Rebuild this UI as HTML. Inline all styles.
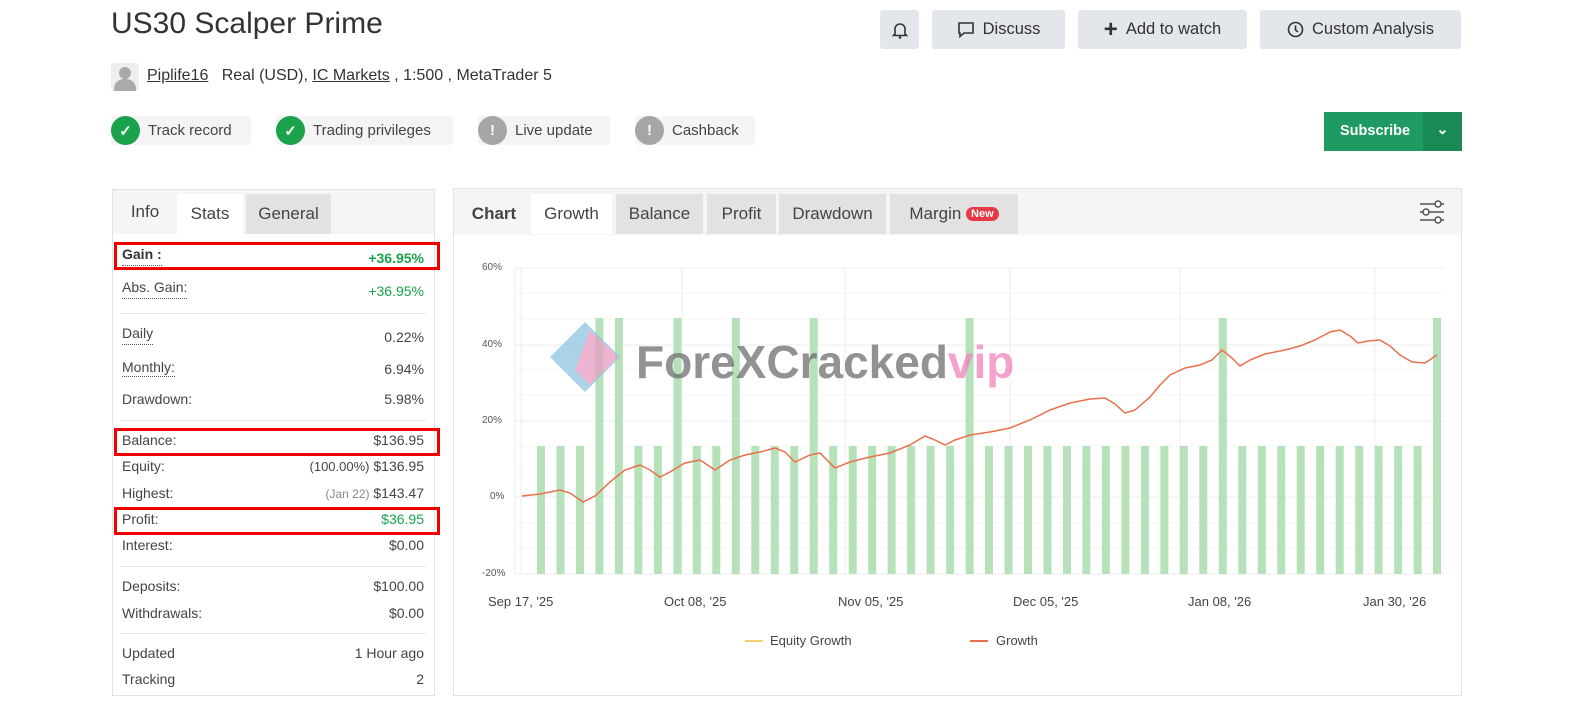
<!DOCTYPE html>
<html><head><meta charset="utf-8"><style>
body{margin:0;width:1571px;height:718px;background:#fff;font-family:"Liberation Sans",sans-serif;color:#333;position:relative;overflow:hidden}
.a{position:absolute}
.btn{position:absolute;top:10px;height:39px;background:#e3e6ea;border-radius:3px;font-size:16.5px;color:#333;display:flex;align-items:center;justify-content:center;gap:8px}
.badge{position:absolute;top:116px;height:29px;background:#f4f4f4;border-radius:3px;font-size:15px;color:#444;display:flex;align-items:center}
.ic{width:29px;height:29px;border-radius:50%;display:flex;align-items:center;justify-content:center;margin-right:8px;color:#fff;font-weight:bold}
.row{position:absolute;left:122px;width:302px;font-size:14px;color:#444;display:flex;justify-content:space-between}
.u{border-bottom:1px dotted #555}
.sep{position:absolute;left:120px;width:306px;height:1px;background:#e6e6e6}
.tab{position:absolute;top:194px;height:40px;font-size:17px;display:flex;align-items:center;justify-content:center;color:#444}
.rb{position:absolute;border:3px solid #e00;left:114px;width:320px;height:22px}
.yl{position:absolute;left:482px;font-size:10px;color:#555}
.xl{position:absolute;top:594px;font-size:13px;color:#444}
</style></head><body>
<div class="a" style="left:111px;top:7px;font-size:30px;color:#333">US30 Scalper Prime</div>
<div class="btn" style="left:880px;width:39px"><svg width="16" height="18" viewBox="0 0 16 18"><path d="M3 13V8a5 5 0 0 1 10 0v5l1.5 1.5h-13z" fill="none" stroke="#333" stroke-width="1.6"/><circle cx="8" cy="16.5" r="1.3" fill="#333"/></svg></div>
<div class="btn" style="left:932px;width:133px"><svg width="18" height="18" viewBox="0 0 18 18"><path d="M2 2h14v10H7l-4 3.5V12H2z" fill="none" stroke="#333" stroke-width="1.6"/></svg>Discuss</div>
<div class="btn" style="left:1078px;width:169px"><span style="font-size:24px;font-weight:bold">+</span>Add to watch</div>
<div class="btn" style="left:1260px;width:201px"><svg width="17" height="17" viewBox="0 0 17 17"><circle cx="8.5" cy="8.5" r="7" fill="none" stroke="#333" stroke-width="1.6"/><path d="M8.5 4.5v4.5l2.5 2" fill="none" stroke="#333" stroke-width="1.6"/></svg>Custom Analysis</div>

<div class="a" style="left:111px;top:63px;width:28px;height:28px;background:#eee;border-radius:3px;overflow:hidden"><div class="a" style="left:8px;top:4px;width:12px;height:12px;border-radius:50%;background:#aaa"></div><div class="a" style="left:3px;top:16px;width:22px;height:14px;border-radius:10px 10px 0 0;background:#aaa"></div></div>
<div class="a" style="left:147px;top:67px;font-size:16px;color:#333"><span style="text-decoration:underline">Piplife16</span>&nbsp;&nbsp; Real (USD), <span style="text-decoration:underline">IC Markets</span> , 1:500 , MetaTrader 5</div>

<div class="badge" style="left:111px;width:140px"><div class="ic" style="background:#1aa34a">✓</div>Track record</div>
<div class="badge" style="left:276px;width:177px"><div class="ic" style="background:#1aa34a">✓</div>Trading privileges</div>
<div class="badge" style="left:478px;width:132px"><div class="ic" style="background:#a6a6a6">!</div>Live update</div>
<div class="badge" style="left:635px;width:120px"><div class="ic" style="background:#a6a6a6">!</div>Cashback</div>

<div class="a" style="left:1324px;top:112px;width:138px;height:39px;background:#1e9a62;color:#fff;font-size:14.5px;font-weight:bold"><div class="a" style="left:16px;top:11px">Subscribe</div><div class="a" style="left:99px;top:0;width:39px;height:39px;background:#198a56;text-align:center;line-height:37px">⌄</div></div>

<!-- left panel -->
<div class="a" style="left:112px;top:189px;width:321px;height:505px;border:1px solid #e3e3e3"></div>
<div class="a" style="left:113px;top:190px;width:321px;height:44px;background:#f5f5f5"></div>
<div class="tab" style="left:113px;width:64px;top:192px">Info</div>
<div class="tab" style="left:177px;width:66px;top:194px;background:#fff">Stats</div>
<div class="tab" style="left:246px;width:85px;top:194px;background:#e2e2e2">General</div>

<div class="rb" style="top:242px"></div>
<div class="row" style="top:246px"><span class="u" style="font-weight:bold;color:#333">Gain :</span><span style="color:#1aa34a;font-weight:bold;padding-top:4px">+36.95%</span></div>
<div class="row" style="top:279px"><span class="u">Abs. Gain:</span><span style="color:#1aa34a;padding-top:4px">+36.95%</span></div>
<div class="sep" style="top:313px"></div>
<div class="row" style="top:325px"><span class="u">Daily</span><span style="padding-top:4px">0.22%</span></div>
<div class="row" style="top:359px"><span class="u">Monthly:</span><span style="padding-top:2px">6.94%</span></div>
<div class="row" style="top:391px"><span>Drawdown:</span><span>5.98%</span></div>
<div class="sep" style="top:420px"></div>
<div class="rb" style="top:428px"></div>
<div class="row" style="top:432px"><span>Balance:</span><span>$136.95</span></div>
<div class="row" style="top:458px"><span>Equity:</span><span><span style="font-size:13px">(100.00%)</span> $136.95</span></div>
<div class="row" style="top:485px"><span>Highest:</span><span><span style="font-size:12px;color:#888">(Jan 22)</span> $143.47</span></div>
<div class="rb" style="top:507px"></div>
<div class="row" style="top:511px"><span>Profit:</span><span style="color:#1aa34a">$36.95</span></div>
<div class="row" style="top:537px"><span>Interest:</span><span>$0.00</span></div>
<div class="sep" style="top:566px"></div>
<div class="row" style="top:578px"><span>Deposits:</span><span>$100.00</span></div>
<div class="row" style="top:605px"><span>Withdrawals:</span><span>$0.00</span></div>
<div class="sep" style="top:633px"></div>
<div class="row" style="top:645px"><span>Updated</span><span>1 Hour ago</span></div>
<div class="row" style="top:671px"><span>Tracking</span><span>2</span></div>

<!-- chart panel -->
<div class="a" style="left:453px;top:188px;width:1007px;height:506px;border:1px solid #e3e3e3"></div>
<div class="a" style="left:454px;top:189px;width:1007px;height:46px;background:#f5f5f5"></div>
<div class="tab" style="left:462px;width:64px;font-weight:bold">Chart</div>
<div class="tab" style="left:531px;width:81px;background:#fff">Growth</div>
<div class="tab" style="left:616px;width:87px;background:#e2e2e2">Balance</div>
<div class="tab" style="left:707px;width:69px;background:#e2e2e2">Profit</div>
<div class="tab" style="left:779px;width:107px;background:#e2e2e2">Drawdown</div>
<div class="tab" style="left:890px;width:128px;background:#e2e2e2">Margin&nbsp;<span style="background:#e63946;color:#fff;font-size:11px;font-weight:bold;border-radius:8px;padding:1px 5px">New</span></div>
<svg class="a" style="left:1418px;top:199px" width="28" height="26" viewBox="0 0 28 26"><g stroke="#555" stroke-width="1.5" fill="#fff"><path d="M2 5h24M2 13h24M2 21h24"/><circle cx="20" cy="5" r="3"/><circle cx="8" cy="13" r="3"/><circle cx="20" cy="21" r="3"/></g></svg>

<div class="yl" style="top:262px">60%</div>
<div class="yl" style="top:339px">40%</div>
<div class="yl" style="top:415px">20%</div>
<div class="yl" style="top:491px;left:490px">0%</div>
<div class="yl" style="top:568px">-20%</div>

<svg class="a" style="left:0;top:0" width="1571" height="718">
<g stroke="#eee" stroke-width="1">
<path d="M515 268H1445M515 345H1445M515 421H1445M515 497H1445M515 574H1445"/>
<path d="M515 293H1445M515 319H1445M515 370H1445M515 395H1445M515 446H1445M515 472H1445M515 523H1445M515 548H1445" stroke="#f5f5f5"/>
<path d="M515 268V574M521 268V574M682 268V574M845 268V574M1010 268V574M1180 268V574M1375 268V574"/>
</g>
<g fill="#b7e2b9">
<rect x="537" y="446" width="8" height="128"/><rect x="556.5" y="446" width="8" height="128"/><rect x="576" y="446" width="8" height="128"/><rect x="595.4" y="318" width="8" height="256"/><rect x="614.9" y="318" width="8" height="256"/><rect x="634.4" y="446" width="8" height="128"/><rect x="653.9" y="446" width="8" height="128"/><rect x="673.4" y="318" width="8" height="256"/><rect x="692.8" y="446" width="8" height="128"/><rect x="712.3" y="446" width="8" height="128"/><rect x="731.8" y="318" width="8" height="256"/><rect x="751.3" y="446" width="8" height="128"/><rect x="770.8" y="446" width="8" height="128"/><rect x="790.2" y="446" width="8" height="128"/><rect x="809.7" y="318" width="8" height="256"/><rect x="829.2" y="446" width="8" height="128"/><rect x="848.7" y="446" width="8" height="128"/><rect x="868.2" y="446" width="8" height="128"/><rect x="887.6" y="446" width="8" height="128"/><rect x="907.1" y="446" width="8" height="128"/><rect x="926.6" y="446" width="8" height="128"/><rect x="946.1" y="446" width="8" height="128"/><rect x="965.6" y="318" width="8" height="256"/><rect x="985" y="446" width="8" height="128"/><rect x="1004.5" y="446" width="8" height="128"/><rect x="1024" y="446" width="8" height="128"/><rect x="1043.5" y="446" width="8" height="128"/><rect x="1063" y="446" width="8" height="128"/><rect x="1082.4" y="446" width="8" height="128"/><rect x="1101.9" y="446" width="8" height="128"/><rect x="1121.4" y="446" width="8" height="128"/><rect x="1140.9" y="446" width="8" height="128"/><rect x="1160.4" y="446" width="8" height="128"/><rect x="1179.8" y="446" width="8" height="128"/><rect x="1199.3" y="446" width="8" height="128"/><rect x="1218.8" y="318" width="8" height="256"/><rect x="1238.3" y="446" width="8" height="128"/><rect x="1257.8" y="446" width="8" height="128"/><rect x="1277.2" y="446" width="8" height="128"/><rect x="1296.7" y="446" width="8" height="128"/><rect x="1316.2" y="446" width="8" height="128"/><rect x="1335.7" y="446" width="8" height="128"/><rect x="1355.2" y="446" width="8" height="128"/><rect x="1374.6" y="446" width="8" height="128"/><rect x="1394.1" y="446" width="8" height="128"/><rect x="1413.6" y="446" width="8" height="128"/><rect x="1433" y="318" width="8" height="256"/>
</g>
<polyline fill="none" stroke="#e8704a" stroke-width="1.5" points="522,496 540,494 560,490 570,493 583,502 595,496 610,482 625,470 640,465 650,470 660,477 670,472 685,463 700,460 715,470 730,460 745,455 760,452 775,448 785,452 795,462 810,455 820,453 835,468 850,462 870,457 890,453 910,445 925,436 935,440 945,445 955,440 970,435 990,432 1010,428 1030,420 1050,410 1070,403 1090,399 1105,398 1115,404 1125,413 1135,410 1150,397 1160,385 1170,375 1185,368 1200,365 1212,360 1222,350 1232,358 1240,366 1250,360 1265,354 1285,350 1300,346 1315,340 1330,332 1340,330 1350,336 1358,343 1368,341 1380,340 1390,346 1400,355 1412,362 1425,363 1437,355"/>
<g opacity="0.75"><path d="M585 322L620 357L585 392L550 357Z" fill="#8ec5e0"/><path d="M590 330L618 357L590 385L575 370Z" fill="#e89cc4"/></g>
<path d="M745 641h18" stroke="#f5d06a" stroke-width="2"/><path d="M970 641h18" stroke="#e8704a" stroke-width="2"/>
</svg>
<div class="a" style="left:636px;top:335px;font-size:46px;font-weight:bold;color:rgba(110,110,110,0.75);letter-spacing:0px">ForeXCracked<span style="color:rgba(240,130,190,0.75)">vip</span></div>

<div class="xl" style="left:488px">Sep 17, '25</div>
<div class="xl" style="left:664px">Oct 08, '25</div>
<div class="xl" style="left:838px">Nov 05, '25</div>
<div class="xl" style="left:1013px">Dec 05, '25</div>
<div class="xl" style="left:1188px">Jan 08, '26</div>
<div class="xl" style="left:1363px">Jan 30, '26</div>
<div class="a" style="left:770px;top:633px;font-size:13px;color:#444">Equity Growth</div>
<div class="a" style="left:996px;top:633px;font-size:13px;color:#444">Growth</div>
</body></html>
